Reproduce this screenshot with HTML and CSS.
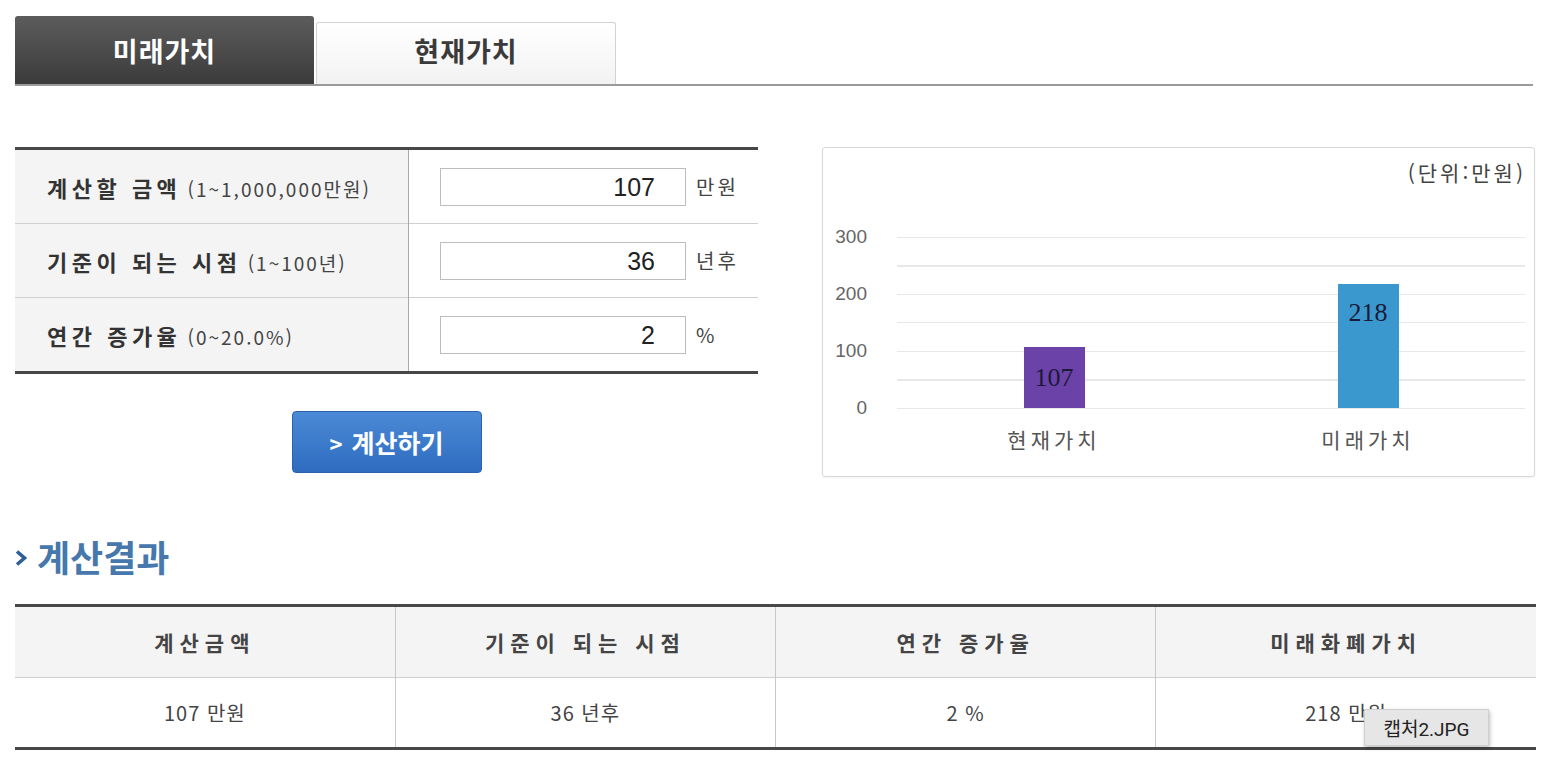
FILE: index.html
```html
<!DOCTYPE html>
<html lang="ko">
<head>
<meta charset="utf-8">
<title>미래가치 계산기</title>
<link rel="stylesheet" href="styles.css">
</head>
<body>
<div class="page">
  <div class="tabs">
    <div class="tab tab-active">미래가치</div>
    <div class="tab tab-idle">현재가치</div>
  </div>

  <div class="calc">
    <div class="form-col">
      <table class="form-table">
        <tr>
          <td class="label"><b>계산할 금액</b> <span class="range">(1~1,000,000만원)</span></td>
          <td class="value"><span class="input">107</span><span class="unit">만원</span></td>
        </tr>
        <tr>
          <td class="label"><b>기준이 되는 시점</b> <span class="range">(1~100년)</span></td>
          <td class="value"><span class="input">36</span><span class="unit">년후</span></td>
        </tr>
        <tr>
          <td class="label"><b>연간 증가율</b> <span class="range">(0~20.0%)</span></td>
          <td class="value"><span class="input">2</span><span class="unit">%</span></td>
        </tr>
      </table>
      <button class="calc-btn"><span class="chev">&gt;</span> 계산하기</button>
    </div>

    <div class="chart">
      <div class="chart-unit">(단위:만원)</div>
      <div class="chart-body">
        <div class="y-axis">
          <span>300</span><span>200</span><span>100</span><span>0</span>
        </div>
        <div class="plot">
          <div class="bar-col"><div class="bar bar-present" style="height:61px">107</div></div>
          <div class="bar-col"><div class="bar bar-future" style="height:124px">218</div></div>
        </div>
        <div></div>
        <div class="x-axis">
          <span>현재가치</span><span>미래가치</span>
        </div>
      </div>
    </div>
  </div>

  <h2 class="result-title"><svg class="title-chev" width="12" height="16" viewBox="0 0 12 16"><path d="M2 1.5 L9.5 8 L2 14.5" fill="none" stroke="#2f5f9a" stroke-width="3.6"/></svg>계산결과</h2>

  <table class="result-table">
    <tr>
      <th>계산금액</th>
      <th>기준이 되는 시점</th>
      <th>연간 증가율</th>
      <th>미래화폐가치</th>
    </tr>
    <tr>
      <td>107 만원</td>
      <td>36 년후</td>
      <td>2 %</td>
      <td>218 만원</td>
    </tr>
  </table>
</div>
<div class="tooltip">캡처2.JPG</div>
</body>
</html>
```

FILE: styles.css
```css
html, body {
  margin: 0;
  padding: 0;
  background: #fff;
}
body {
  font-family: "Noto Sans CJK KR", "Noto Sans", sans-serif;
  color: #333;
}
.page {
  width: 1521px;
  padding: 16px 0 0 15px;
}

/* tabs */
.tabs {
  display: flex;
  align-items: flex-end;
  height: 68px;
  border-bottom: 2px solid #9a9a9a;
  width: 1518px;
}
.tab {
  display: flex;
  align-items: center;
  justify-content: center;
  font-size: 27px;
  font-weight: 700;
  letter-spacing: 1px;
  border-radius: 3px 3px 0 0;
  box-sizing: border-box;
}
.tab-active {
  width: 299px;
  height: 68px;
  background: linear-gradient(#5c5c5c, #3b3b3b);
  color: #fff;
}
.tab-idle {
  width: 300px;
  height: 62px;
  margin-left: 2px;
  padding-bottom: 6px;
  background: linear-gradient(#ffffff, #f2f2f2);
  border: 1px solid #d2d2d2;
  border-bottom: none;
  color: #3a3a3a;
}

/* calculator */
.calc {
  display: flex;
  align-items: flex-start;
  margin-top: 61px;
}
.form-col {
  width: 743px;
  display: flex;
  flex-direction: column;
  align-items: center;
}
.form-table {
  width: 743px;
  border-collapse: collapse;
  border-top: 3px solid #474747;
  border-bottom: 3px solid #474747;
}
.form-table td {
  height: 73px;
  padding: 0;
}
.form-table tr + tr td {
  border-top: 1px solid #cfcfcf;
}
.label {
  width: 361px;
  padding-left: 32px !important;
  background: #f4f4f4;
  border-right: 1px solid #a8a8a8;
  font-size: 22px;
  color: #333;
  white-space: nowrap;
}
.label b {
  letter-spacing: 4.5px;
  font-weight: 700;
}
.range {
  font-size: 19px;
  color: #444;
  letter-spacing: 2px;
}
.value {
  padding-left: 31px !important;
}
.input {
  display: inline-block;
  vertical-align: middle;
  width: 246px;
  height: 38px;
  box-sizing: border-box;
  border: 1px solid #bdbdbd;
  text-align: right;
  padding-right: 30px;
  font-family: "Liberation Sans", Arial, sans-serif;
  font-size: 25px;
  line-height: 36px;
  color: #222;
}
.unit {
  display: inline-block;
  vertical-align: middle;
  margin-left: 10px;
  font-size: 20px;
  color: #444;
  letter-spacing: 3px;
}
.calc-btn {
  margin-top: 37px;
  width: 190px;
  height: 62px;
  border: 1px solid #2b62ad;
  border-radius: 4px;
  background: linear-gradient(#4b8ad6, #2f6cc0);
  color: #fff;
  font-family: "Noto Sans CJK KR", sans-serif;
  font-size: 25px;
  font-weight: 700;
  cursor: pointer;
  padding: 0;
}
.chev {
  font-size: 22px;
  margin-right: 2px;
}

/* chart */
.chart {
  margin-left: 64px;
  width: 711px;
  height: 328px;
  border: 1px solid #d8d8d8;
  border-radius: 3px;
  box-shadow: 0 1px 2px rgba(0,0,0,0.06);
}
.chart-unit {
  text-align: right;
  padding: 12px 8px 0 0;
  font-size: 21px;
  line-height: 24px;
  color: #444;
  letter-spacing: 3px;
}
.chart-body {
  display: grid;
  grid-template-columns: 74px 628px;
  margin-top: 53px;
}
.y-axis {
  display: flex;
  flex-direction: column;
  justify-content: space-between;
  align-items: flex-end;
  height: 191px;
  margin-top: -10px;
  padding-right: 30px;
  font-family: "Liberation Sans", Arial, sans-serif;
  font-size: 19px;
  line-height: 20px;
  color: #666;
}
.plot {
  height: 172px;
  display: grid;
  grid-template-columns: 1fr 1fr;
  background: repeating-linear-gradient(to bottom, #e8e8e8 0, #e8e8e8 1px, transparent 1px, transparent 28.5px);
}
.bar-col {
  display: flex;
  align-items: flex-end;
  justify-content: center;
}
.bar {
  width: 61px;
  margin-bottom: 1px;
  display: flex;
  justify-content: center;
  font-family: "Liberation Serif", "Times New Roman", serif;
  font-size: 26px;
  color: #1a1a3a;
}
.bar-present {
  background: #6b42a8;
  align-items: center;
}
.bar-future {
  background: #3b98cf;
  align-items: flex-start;
  padding-top: 14px;
  box-sizing: border-box;
}
.x-axis {
  display: grid;
  grid-template-columns: 1fr 1fr;
  text-align: center;
  margin-top: 9px;
  font-size: 21px;
  line-height: 24px;
  color: #555;
  letter-spacing: 4px;
}

/* results */
.result-title {
  display: flex;
  align-items: center;
  margin: 56px 0 0 0;
  height: 46px;
  font-size: 36px;
  font-weight: 700;
  line-height: 46px;
  color: #4677ad;
  letter-spacing: 0;
}
.title-chev {
  margin: 4px 10px 0 0;
}
.result-table {
  width: 1521px;
  margin-top: 25px;
  border-collapse: collapse;
  border-top: 3px solid #474747;
  border-bottom: 3px solid #474747;
  table-layout: fixed;
}
.result-table th {
  height: 70px;
  background: #f4f4f4;
  font-size: 21px;
  font-weight: 700;
  color: #444;
  letter-spacing: 6px;
  padding: 0;
}
.result-table td {
  height: 69px;
  text-align: center;
  font-size: 20px;
  color: #444;
  letter-spacing: 1px;
  border-top: 1px solid #cfcfcf;
  padding: 0;
}
.result-table th + th,
.result-table td + td {
  border-left: 1px solid #c8c8c8;
}

.tooltip {
  position: absolute;
  left: 1364px;
  top: 709px;
  width: 125px;
  height: 37px;
  box-sizing: border-box;
  display: flex;
  align-items: center;
  justify-content: center;
  background: #e6e6e6;
  border: 1px solid #cfcfcf;
  box-shadow: 1px 2px 4px rgba(0,0,0,0.25);
  font-family: Roboto, "Noto Sans CJK KR", sans-serif;
  font-size: 19px;
  color: #222;
}
```
